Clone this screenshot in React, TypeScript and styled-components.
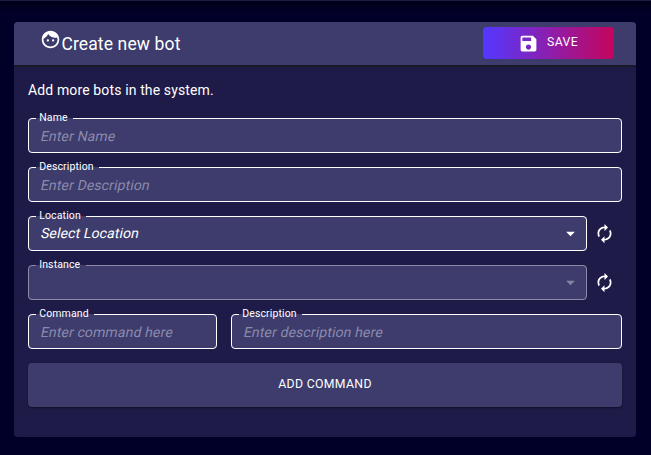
import React from "react";
import styled, { createGlobalStyle } from "styled-components";

const GlobalStyle = createGlobalStyle`
  *, *::before, *::after { box-sizing: border-box; }
  html { font-size: 14px; }
  body {
    margin: 0;
    background: #010028;
    color: #fff;
    font-family: Roboto, "Liberation Sans", sans-serif;
    letter-spacing: 0.00938em;
  }
  button, input { font: inherit; color: inherit; letter-spacing: inherit; }
`;

const Page = styled.main`
  height: 455px;
  overflow: hidden;
  padding: 21px 15px 18px 14px;
  border-top: 1px solid #1f1b48;
  background: linear-gradient(#010018, #010028 12px);
`;

const Card = styled.section`
  height: 415px;
  border-radius: 4px;
  background: #1f1b48;
  overflow: hidden;
`;

const CardHeader = styled.header`
  display: flex;
  align-items: center;
  justify-content: space-between;
  height: 43px;
  padding: 0 22px 1px 26px;
  background: #3d3c6d;
  box-shadow: 0 1px 1px 1px rgba(26, 26, 30, 0.75);
`;

const Title = styled.h1`
  display: flex;
  align-items: center;
  margin: 0;
  padding-top: 2px;
  font-size: 17.5px;
  font-weight: 400;
  line-height: 28px;
  letter-spacing: 0.0075em;

  svg { margin: -10px 0.4px 0 0; }
`;

const SaveButton = styled.button`
  display: flex;
  align-items: center;
  justify-content: center;
  width: 131px;
  height: 32px;
  padding: 0;
  border: 0;
  border-radius: 4px;
  background: linear-gradient(90deg, #5338ff, #c4055c);
  font-size: 12.25px;
  letter-spacing: 0.02857em;

  svg { margin: 1px 8px 0 0; }
  span { margin: -2px 1px 0 0; }
`;

const CardBody = styled.div`
  display: flex;
  flex-direction: column;
  gap: 14px;
  padding: 14px;
`;

const Intro = styled.p`
  margin: 0;
  height: 25px;
  line-height: 22px;
  font-size: 14px;
`;

const Row = styled.div`
  display: flex;
  gap: 14px;
`;

const Field = styled.div<{ $width?: number }>`
  position: relative;
  display: flex;
  align-items: center;
  flex: ${(p) => (p.$width ? `0 0 ${p.$width}px` : "1 1 0")};
  min-width: 0;
  height: 35px;
  padding: 0 10px 0 13px;
  border-radius: 4px;
  background: #3d3c6d;
`;

const Outline = styled.fieldset<{ $muted?: boolean }>`
  position: absolute;
  inset: -5px 0 0;
  margin: 0;
  padding: 0 7px;
  border: 1px solid ${(p) => (p.$muted ? "#8b8aa8" : "#fff")};
  border-radius: 4px;
  pointer-events: none;
`;

const Notch = styled.legend<{ $width: number }>`
  width: ${(p) => p.$width}px;
  height: 11px;
  padding: 0 0 0 3.2px;
  font-size: 10.5px;
  line-height: 10px;
  white-space: nowrap;
`;

const TextInput = styled.input`
  width: 100%;
  padding: 0;
  border: 0;
  outline: 0;
  background: transparent;
  font-size: 14px;
  transform: skewX(-12deg);

  &::placeholder { color: #8b8aab; opacity: 1; }
`;

const SelectValue = styled.span`
  flex: 1;
  padding-bottom: 2px;
  font-size: 14px;
  transform: skewX(-12deg);
`;

const Arrow = styled.svg<{ $muted?: boolean }>`
  width: 21px;
  height: 21px;
  margin-right: -4px;
  fill: ${(p) => (p.$muted ? "#8583a4" : "#fff")};
`;

const RefreshButton = styled.button`
  display: flex;
  align-items: center;
  justify-content: center;
  width: 21px;
  margin-left: -7px;
  padding: 0;
  border: 0;
  background: none;
`;

const AddButton = styled.button`
  height: 44px;
  padding: 0 0 2px;
  border: 0;
  border-radius: 4px;
  background: #3d3c6d;
  box-shadow: 0 1px 2px rgba(0, 0, 0, 0.5);
  font-size: 12.25px;
  letter-spacing: 0.02857em;
`;

function Icon({ d, size = 21 }: { d: string; size?: number }) {
  return (
    <svg width={size} height={size} viewBox="0 0 24 24" fill="#fff">
      <path d={d} />
    </svg>
  );
}

const FACE =
  "M9 11.75c-.69 0-1.25.56-1.25 1.25s.56 1.25 1.25 1.25 1.25-.56 1.25-1.25-.56-1.25-1.25-1.25zm6 0c-.69 0-1.25.56-1.25 1.25s.56 1.25 1.25 1.25 1.25-.56 1.25-1.25-.56-1.25-1.25-1.25zM12 2C6.48 2 2 6.48 2 12s4.48 10 10 10 10-4.48 10-10S17.52 2 12 2zm0 18c-4.41 0-8-3.59-8-8 0-.29.02-.58.05-.86 2.36-1.05 4.23-2.98 5.21-5.37C11.07 8.33 14.05 10 17.42 10c.78 0 1.53-.09 2.25-.26.21.71.33 1.47.33 2.26 0 4.41-3.59 8-8 8z";
const DISK =
  "M17 3H5c-1.11 0-2 .9-2 2v14c0 1.1.89 2 2 2h14c1.1 0 2-.9 2-2V7l-4-4zm-5 16c-1.66 0-3-1.34-3-3s1.34-3 3-3 3 1.34 3 3-1.34 3-3 3zm3-10H5V5h10v4z";
const REFRESH =
  "M12 6v3l4-4-4-4v3c-4.42 0-8 3.58-8 8 0 1.57.46 3.03 1.24 4.26L6.7 14.8c-.45-.83-.7-1.79-.7-2.8 0-3.31 2.69-6 6-6zm6.76 1.74L17.3 9.2c.44.84.7 1.79.7 2.8 0 3.31-2.69 6-6 6v-3l-4 4 4 4v-3c4.42 0 8-3.58 8-8 0-1.57-.46-3.03-1.24-4.26z";

type OutlinedProps = {
  label: string;
  notch: number;
  width?: number;
  muted?: boolean;
  children?: React.ReactNode;
};

function Outlined({ label, notch, width, muted, children }: OutlinedProps) {
  return (
    <Field $width={width}>
      {children}
      <Outline $muted={muted}>
        <Notch $width={notch}>{label}</Notch>
      </Outline>
    </Field>
  );
}

function SelectRow({ label, value, muted }: { label: string; value: string; muted?: boolean }) {
  return (
    <Row>
      <Outlined label={label} notch={50} width={559} muted={muted}>
        <SelectValue>{value}</SelectValue>
        <Arrow $muted={muted} viewBox="0 0 24 24">
          <path d="M7 10l5 5 5-5z" />
        </Arrow>
      </Outlined>
      <RefreshButton aria-label={`Refresh ${label}`}>
        <Icon d={REFRESH} />
      </RefreshButton>
    </Row>
  );
}

export default function App() {
  return (
    <>
      <GlobalStyle />
      <Page>
        <Card>
          <CardHeader>
            <Title>
              <Icon d={FACE} />
              Create new bot
            </Title>
            <SaveButton>
              <Icon d={DISK} />
              <span>SAVE</span>
            </SaveButton>
          </CardHeader>
          <CardBody>
            <Intro>Add more bots in the system.</Intro>
            <Row>
              <Outlined label="Name" notch={37}>
                <TextInput placeholder="Enter Name" />
              </Outlined>
            </Row>
            <Row>
              <Outlined label="Description" notch={63}>
                <TextInput placeholder="Enter Description" />
              </Outlined>
            </Row>
            <SelectRow label="Location" value="Select Location" />
            <SelectRow label="Instance" value="" muted />
            <Row>
              <Outlined label="Command" notch={58} width={189}>
                <TextInput placeholder="Enter command here" />
              </Outlined>
              <Outlined label="Description" notch={63}>
                <TextInput placeholder="Enter description here" />
              </Outlined>
            </Row>
            <AddButton>ADD COMMAND</AddButton>
          </CardBody>
        </Card>
      </Page>
    </>
  );
}
